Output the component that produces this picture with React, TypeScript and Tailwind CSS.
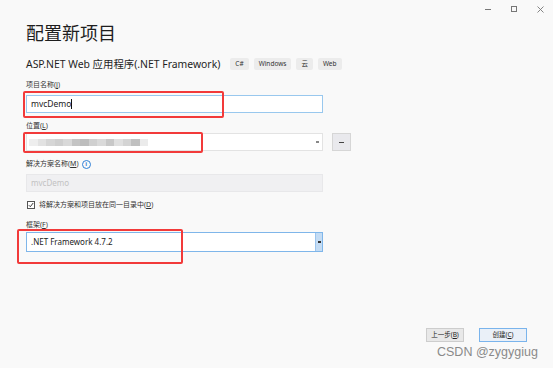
import React from "react";

const FONT = '"Noto Sans", "Noto Sans CJK SC", sans-serif';

function Tag({ children }: { children: React.ReactNode }) {
  return (
    <span className="h-[12px] px-[5px] rounded-[2px] bg-[#ececec] text-[6.5px] leading-[12px] text-[#333]">
      {children}
    </span>
  );
}

function Label({ children }: { children: React.ReactNode }) {
  return <div className="h-[10px] text-[7px] leading-[10px] text-[#333]">{children}</div>;
}

export default function App() {
  const blur = ["#eeeeee", "#e2e2e2", "#d6d6d6", "#cfcfcf", "#d9d9d9", "#c4c4c4", "#bdbdbd", "#d0d0d0", "#dadada", "#c8c8c8", "#e0e0e0", "#d4d4d4", "#c0c0c0", "#ebebeb"];
  return (
    <div className="relative w-[553px] h-[368px] bg-[#f9f9f9] overflow-hidden" style={{ fontFamily: FONT }}>
      {/* window controls */}
      <div className="h-[18px] flex justify-end items-center pr-[9px] gap-[20px] text-[#555]">
        <span className="w-[6px] h-px bg-[#777]" />
        <span className="w-[6px] h-[6px] border border-[#777]" />
        <svg width="7" height="7" viewBox="0 0 7 7">
          <path d="M0.5 0.5 L6.5 6.5 M6.5 0.5 L0.5 6.5" stroke="#777" strokeWidth="0.9" />
        </svg>
      </div>

      <div className="pl-[26px]">
        <div className="h-[30px] text-[18px] leading-[30px] text-[#1e1e1e]">配置新项目</div>

        <div className="mt-[8px] h-[16px] flex items-center">
          <span className="text-[10.4px] leading-[16px] text-[#1e1e1e]">ASP.NET Web 应用程序(.NET Framework)</span>
          <div className="ml-[10px] flex items-center gap-[5px]">
            <Tag>C#</Tag>
            <Tag>Windows</Tag>
            <Tag>云</Tag>
            <Tag>Web</Tag>
          </div>
        </div>

        <div className="mt-[8px]">
          <Label>项目名称(<span className="underline">J</span>)</Label>
        </div>
        <div className="mt-[5px] w-[297px] h-[18px] bg-white border border-[#99c8ee] flex items-center pl-[4px]">
          <span className="text-[8.5px] leading-[10px] text-[#222]">mvcDemo</span>
          <span className="w-px h-[10px] bg-[#111]" />
        </div>

        <div className="mt-[8px]">
          <Label>位置(<span className="underline">L</span>)</Label>
        </div>
        <div className="mt-[2px] flex items-center">
          <div className="w-[297px] h-[18px] bg-white border border-[#e3e3e3] flex items-center pl-[2px] pr-[3px]">
            <div className="flex h-[7px] blur-[0.6px]">
              {blur.map((c, i) => (
                <span key={i} className="w-[8.5px] h-[7px]" style={{ background: c }} />
              ))}
            </div>
            <div className="flex-1" />
            <span className="w-[3px] h-[2px] bg-[#888]" />
          </div>
          <div className="ml-[9px] w-[19px] h-[18px] bg-[#e9e9ed] border border-[#d6d6d6] flex items-center justify-center">
            <span className="w-[5px] h-px bg-[#444] mt-[1px]" />
          </div>
        </div>

        <div className="mt-[8px] flex items-center gap-[3px]">
          <Label>解决方案名称(<span className="underline">M</span>)</Label>
          <span className="w-[9px] h-[9px] rounded-full border border-[#2f7fd6] text-[#2f7fd6] text-[6px] leading-[7px] text-center font-bold">
            i
          </span>
        </div>
        <div className="mt-[5px] w-[297px] h-[18px] bg-[#f0f0f2] border border-[#e8e8ea] flex items-center pl-[4px]">
          <span className="text-[8px] leading-[10px] text-[#c2c2c2]">mvcDemo</span>
        </div>

        <div className="mt-[8px] h-[10px] flex items-center">
          <span className="ml-[1px] w-[8px] h-[8px] bg-white border border-[#555] flex items-center justify-center">
            <svg width="6" height="6" viewBox="0 0 6 6">
              <path d="M0.8 3.2 L2.3 4.7 L5.2 1" stroke="#222" strokeWidth="0.9" fill="none" />
            </svg>
          </span>
          <span className="ml-[4px] text-[7px] leading-[10px] text-[#333]">
            将解决方案和项目放在同一目录中(<span className="underline">D</span>)
          </span>
        </div>

        <div className="mt-[10px]">
          <Label>框架(<span className="underline">F</span>)</Label>
        </div>
        <div className="mt-[2px] w-[297px] h-[20px] bg-white border border-[#7fb6ea] flex items-center">
          <span className="pl-[4px] text-[8px] leading-[10px] text-[#222]">.NET Framework 4.7.2</span>
          <div className="flex-1" />
          <div className="w-[7px] h-full bg-[#c4dcf4] border-l border-[#9cc5ee] flex items-center justify-center">
            <span className="w-[3px] h-[2px] bg-[#333]" />
          </div>
        </div>
      </div>

      <div className="mt-[76px] pr-[26px] flex justify-end gap-[15px]">
        <button className="w-[38px] h-[14px] bg-[#e8e8e8] border border-[#cdcdcd] text-[6.5px] leading-[12px] text-[#222]">
          上一步(<span className="underline">B</span>)
        </button>
        <button className="w-[48px] h-[14px] bg-[#eaf0f8] border border-[#7ab4ec] text-[6.5px] leading-[12px] text-[#222]">
          创建(<span className="underline">C</span>)
        </button>
      </div>

      {/* red annotation boxes */}
      <div className="absolute left-[23px] top-[91px] w-[201px] h-[27px] border-2 border-[#f23a3a] rounded-[2px]" />
      <div className="absolute left-[23px] top-[132px] w-[180px] h-[21px] border-2 border-[#f23a3a] rounded-[2px]" />
      <div className="absolute left-[17px] top-[229px] w-[166px] h-[35px] border-2 border-[#f23a3a] rounded-[2px]" />

      {/* watermark */}
      <div
        className="absolute left-[437px] top-[343px] text-[12.5px] leading-[18px] text-[#8a8a8a]"
        style={{ fontFamily: '"Liberation Sans", sans-serif' }}
      >
        CSDN @zygygiug
      </div>
    </div>
  );
}
